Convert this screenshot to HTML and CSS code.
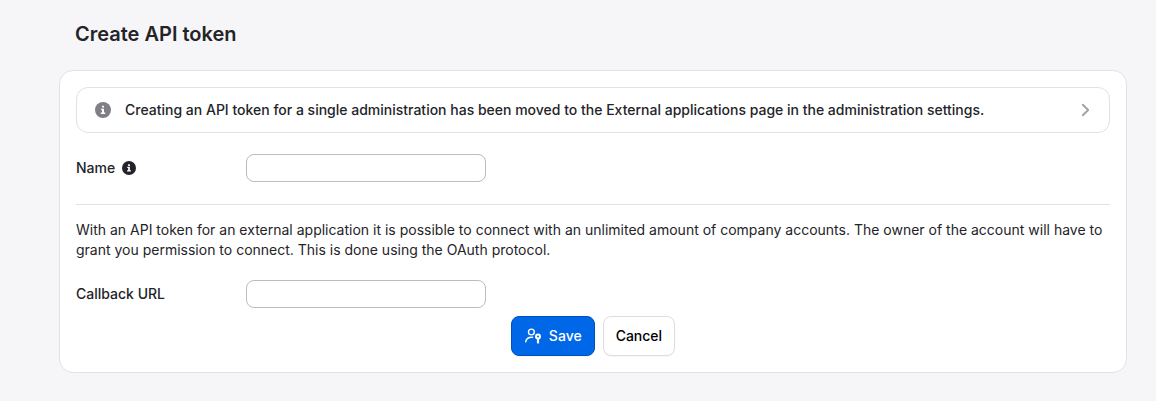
FILE: index.html
```html
<!DOCTYPE html>
<html lang="en">
<head>
    <meta charset="utf-8">
    <title>Create API token</title>
    <meta name="viewport" content="width=device-width, initial-scale=1.0">
    <link rel="stylesheet" href="styles.css">
</head>
<body>
    <main class="page">
        <h1>Create API token</h1>

        <form class="card">
            <a href="#" class="notice">
                <svg class="notice-icon" width="16" height="16" viewBox="0 0 16 16" aria-hidden="true">
                    <circle cx="8" cy="8" r="8" fill="currentColor"/>
                    <path d="M7 3.7h2v1.9H7zM6 6.7h3v3.8h1.2V12H5.8v-1.5H7V8.1H6z" fill="#fff"/>
                </svg>
                <span class="notice-text">Creating an API token for a single administration has been moved to the External applications page in the administration settings.</span>
                <svg class="notice-arrow" width="16" height="16" viewBox="0 0 16 16" aria-hidden="true">
                    <path d="M5.8 2.7 11.2 8 5.8 13.3" fill="none" stroke="currentColor" stroke-width="1.9" stroke-linecap="round" stroke-linejoin="round"/>
                </svg>
            </a>

            <div class="field">
                <label for="name">Name
                    <svg class="help-icon" width="14" height="14" viewBox="0 0 16 16" aria-hidden="true">
                        <circle cx="8" cy="8" r="8" fill="currentColor"/>
                        <path d="M7 3.7h2v1.9H7zM6 6.7h3v3.8h1.2V12H5.8v-1.5H7V8.1H6z" fill="#fff"/>
                    </svg>
                </label>
                <input type="text" id="name" name="name">
            </div>

            <hr>

            <p>With an API token for an external application it is possible to connect with an unlimited amount of company accounts. The owner of the account will have to grant you permission to connect. This is done using the OAuth protocol.</p>

            <div class="field">
                <label for="callback-url">Callback URL</label>
                <input type="text" id="callback-url" name="callback_url">
            </div>

            <div class="actions">
                <button type="submit" class="button button-primary">
                    <svg width="18" height="18" viewBox="0 0 18 18" fill="none" stroke="currentColor" stroke-width="1.4" stroke-linecap="round" aria-hidden="true">
                        <circle cx="7.4" cy="5" r="2.9"/>
                        <path d="M1.7 14.9c.5-3.4 2.8-4.8 6.9-4.6"/>
                        <circle cx="14" cy="9.6" r="2" stroke-width="2"/>
                        <path d="M14 12v3.6" stroke-width="2.2"/>
                    </svg>
                    Save
                </button>
                <button type="button" class="button">Cancel</button>
            </div>
        </form>
    </main>
</body>
</html>
```
FILE: styles.css
```css
* {
    box-sizing: border-box;
}

body {
    margin: 0;
    background: #f6f6f9;
    color: #242428;
    font-family: Inter, "Liberation Sans", sans-serif;
    font-size: 14px;
    line-height: 20px;
}

.page {
    padding: 20px 29px 28px 59px;
}

h1 {
    margin: 0 16px 22px;
    font-size: 20px;
    font-weight: 600;
    line-height: 28px;
}

.card {
    padding: 16px;
    background: #fff;
    border: 1px solid #e2e2e5;
    border-radius: 14px;
}

.notice {
    display: flex;
    align-items: center;
    margin-bottom: 21px;
    padding: 12px 16px 12px 18px;
    border: 1px solid #e2e2e5;
    border-radius: 12px;
    color: #242428;
    font-weight: 500;
    text-decoration: none;
}

.notice-icon {
    flex: none;
    margin-right: 14px;
    color: #7f7f85;
}

.notice-text {
    flex: 1;
}

.notice-arrow {
    flex: none;
    color: #a2a2a6;
}

.field {
    display: flex;
    align-items: center;
}

.field label {
    display: flex;
    align-items: center;
    gap: 7px;
    width: 170px;
    font-weight: 500;
}

.field input {
    width: 240px;
    height: 28px;
    padding: 0 8px;
    background: #fff;
    border: 1px solid #bcbcc0;
    border-radius: 8px;
    color: inherit;
    font: inherit;
}

hr {
    margin: 22px 0 15px;
    border: 0;
    border-top: 1px solid #e2e2e5;
}

p {
    margin: 0 0 20px;
}

.actions {
    display: flex;
    justify-content: center;
    gap: 8px;
    margin-top: 8px;
}

.button {
    display: flex;
    align-items: center;
    gap: 7px;
    height: 40px;
    padding: 0 12px;
    background: #fff;
    border: 1px solid #dedee1;
    border-radius: 8px;
    box-shadow: 0 1px 1px rgba(0, 0, 0, 0.04);
    color: #000;
    font: inherit;
    font-weight: 500;
    cursor: pointer;
}

.button-primary {
    background: #0068e8;
    border-color: #0052b8;
    color: #fff;
}
```
